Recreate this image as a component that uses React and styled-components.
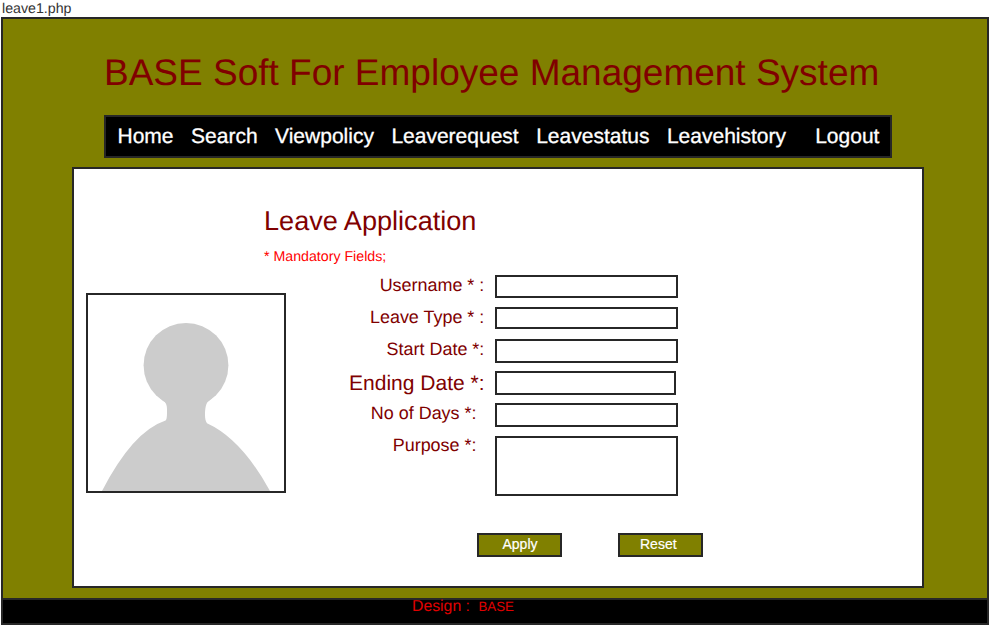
import React from "react";
import styled, { createGlobalStyle } from "styled-components";

const GlobalStyle = createGlobalStyle`
  *, *::before, *::after { box-sizing: border-box; }
  body {
    margin: 0;
    background: #fff;
    font-family: "Liberation Sans", Arial, sans-serif;
    text-rendering: geometricPrecision;
    overflow: hidden;
  }
`;

const INK = "#272727";

const Page = styled.div`
  width: 991px;
  height: 627px;
  display: flex;
  flex-direction: column;
  padding-left: 1px;
`;

const FileName = styled.div`
  height: 17px;
  padding-left: 1px;
  font-size: 14.2px;
  line-height: 19px;
  color: #333;
`;

const Frame = styled.div`
  width: 988px;
  height: 608px;
  display: flex;
  flex-direction: column;
  border: 2px solid ${INK};
  background: #808000;
`;

const Title = styled.h1`
  margin: 32px 0 20px 101px;
  font-size: 37px;
  font-weight: 400;
  line-height: 44px;
  white-space: nowrap;
  color: #800000;
`;

const Nav = styled.nav`
  width: 788px;
  height: 43px;
  margin-left: 101px;
  padding: 8px 0 0 11.5px;
  display: flex;
  gap: 17.5px;
  border: 2px solid ${INK};
  background: #000;
`;

const NavLink = styled.a`
  margin-left: ${(p) => (p.$apart ? "11.7px" : 0)};
  font-size: 21px;
  line-height: 24px;
  color: #fff;
  -webkit-text-stroke: 0.3px #fff;
`;

const Panel = styled.main`
  width: 852px;
  height: 421px;
  margin: 9px 0 10px 69px;
  padding-left: 12px;
  display: flex;
  align-items: flex-start;
  border: 2px solid ${INK};
  background: #fff;
`;

const Avatar = styled.div`
  width: 200px;
  height: 200px;
  margin-top: 124px;
  flex: none;
  border: 2px solid ${INK};

  svg { display: block; }
`;

const Form = styled.form`
  width: 460px;
  margin: 36px 0 0 -22px;
`;

const Heading = styled.h2`
  margin: 0;
  font-size: 27.1px;
  font-weight: 400;
  line-height: 32px;
  color: #800000;
`;

const Note = styled.p`
  margin: 12px 0 10px;
  font-size: 14.2px;
  line-height: 16px;
  color: #f00;
`;

const Row = styled.div`
  display: grid;
  grid-template-columns: 221px auto;
  column-gap: 10px;
  align-items: start;
  justify-content: start;
  height: ${(p) => p.$height}px;
`;

const Label = styled.label`
  margin-top: ${(p) => p.$shift || 0}px;
  padding-right: ${(p) => p.$inset}px;
  font-size: ${(p) => (p.$large ? 21 : 17.95)}px;
  line-height: ${(p) => (p.$large ? 24 : 20)}px;
  text-align: right;
  white-space: nowrap;
  color: #800000;
`;

const Field = styled.input`
  display: block;
  width: ${(p) => p.$width}px;
  height: ${(p) => p.$height}px;
  padding: 0 4px;
  border: 2px solid ${INK};
  border-radius: 0;
  background: #fff;
  outline: none;
`;

const Area = styled(Field).attrs({ as: "textarea" })`
  resize: none;
`;

const Actions = styled.div`
  display: flex;
  gap: 56px;
  margin: 37px 0 0 213px;
`;

const Button = styled.button`
  width: 85px;
  height: 24px;
  padding: 1px 0 3px ${(p) => p.$indent}px;
  border: 2px solid ${INK};
  border-radius: 0;
  background: #808000;
  font: 14px/16px "Liberation Sans", Arial, sans-serif;
  text-align: left;
  color: #fff;
  -webkit-text-stroke: 0.2px #fff;
`;

const Footer = styled.footer`
  flex: 1;
  display: flex;
  align-items: flex-start;
  gap: 8.5px;
  padding-left: 409px;
  border-top: 2px solid ${INK};
  background: #000;
  color: #e00000;
`;

const Credit = styled.span`
  font-size: ${(p) => p.$size}px;
  line-height: 14px;
`;

const links = ["Home", "Search", "Viewpolicy", "Leaverequest", "Leavestatus", "Leavehistory", "Logout"];

const fields = [
  { id: "username", label: "Username * :", inset: 0.7, height: 23, row: 32 },
  { id: "type", label: "Leave Type * :", inset: 0.7, height: 22, row: 32 },
  { id: "start", label: "Start Date *:", inset: 0.7, height: 24, row: 32 },
  { id: "end", label: "Ending Date *:", inset: 0.5, height: 24, row: 32, large: true, width: 181, shift: 1 },
  { id: "days", label: "No of Days *:", inset: 8.5, height: 24, row: 33 },
  { id: "purpose", label: "Purpose *:", inset: 8.5, height: 60, row: 60, multiline: true, shift: -1 },
];

function Silhouette() {
  return (
    <svg width="196" height="196" viewBox="0 0 196 196" fill="#ccc">
      <circle cx="98" cy="70.3" r="42.4" />
      <path d="M72 103 C76 106 79 107.500 79 114 L79 118 C79 122 78.500 125.300 77.500 125.500 Q44.600 136.500 14 196 L182 196 Q153.500 144 119 128.300 C117.500 126 117 123 117 120 C117 113 118 108 121 105.500 L124 103 Z" />
    </svg>
  );
}

export default function App() {
  return (
    <Page>
      <GlobalStyle />
      <FileName>leave1.php</FileName>
      <Frame>
        <Title>BASE Soft For Employee Management System</Title>
        <Nav>
          {links.map((name) => (
            <NavLink key={name} $apart={name === "Logout"}>{name}</NavLink>
          ))}
        </Nav>
        <Panel>
          <Avatar><Silhouette /></Avatar>
          <Form>
            <Heading>Leave Application</Heading>
            <Note>* Mandatory Fields;</Note>
            {fields.map((f) => {
              const Control = f.multiline ? Area : Field;
              return (
                <Row key={f.id} $height={f.row}>
                  <Label htmlFor={f.id} $large={f.large} $inset={f.inset} $shift={f.shift}>{f.label}</Label>
                  <Control id={f.id} $width={f.width || 183} $height={f.height} />
                </Row>
              );
            })}
            <Actions>
              <Button type="button" $indent={23.5}>Apply</Button>
              <Button type="button" $indent={20}>Reset</Button>
            </Actions>
          </Form>
        </Panel>
        <Footer>
          <Credit $size={15.8}>Design :</Credit>
          <Credit $size={13.3}>BASE</Credit>
        </Footer>
      </Frame>
    </Page>
  );
}
